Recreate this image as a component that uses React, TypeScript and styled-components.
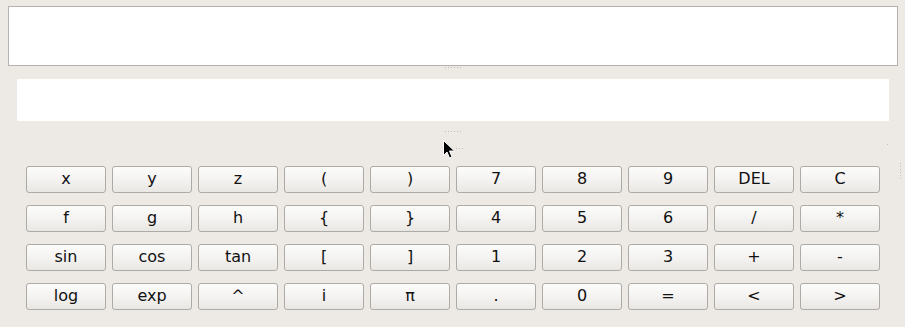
import * as React from 'react';
import styled, { createGlobalStyle } from 'styled-components';

const GlobalStyle = createGlobalStyle`
  html, body {
    margin: 0;
    padding: 0;
    background: #edeae5;
  }
`;

const Window = styled.div`
  position: relative;
  width: 905px;
  height: 327px;
  overflow: hidden;
  background: #edeae5;
  font-family: "DejaVu Sans", "Liberation Sans", sans-serif;
  display: flex;
  flex-direction: column;
`;

const History = styled.div`
  margin: 6px 0 0 8px;
  width: 888px;
  height: 58px;
  background: #fff;
  border: 1px solid #b4b2ae;
`;

const Handle = styled.div<{ $height: number; $top: number }>`
  height: ${props => props.$height}px;
  display: flex;
  justify-content: center;
  padding-top: ${props => props.$top}px;
  box-sizing: border-box;
`;

const Dots = styled.div<{ $width: number; $shift?: number }>`
  width: ${props => props.$width}px;
  height: 1px;
  margin-left: ${props => props.$shift || 0}px;
  background: repeating-linear-gradient(
    to right,
    #bdb9b2 0,
    #bdb9b2 1px,
    transparent 1px,
    transparent 3px
  );
`;

const Input = styled.div`
  margin-left: 17px;
  width: 872px;
  height: 42px;
  background: #fff;
`;

const Middle = styled.div`
  height: 45px;
  display: flex;
  flex-direction: column;
  align-items: center;
  padding-top: 10px;
  box-sizing: border-box;
  gap: 16px;
`;

const Keypad = styled.div`
  display: grid;
  grid-template-columns: repeat(10, 80px);
  grid-auto-rows: 27px;
  gap: 12px 6px;
  padding-left: 26px;
`;

const Key = styled.button`
  box-sizing: border-box;
  margin: 0;
  padding: 0 0 1px;
  border: 1px solid #aeaba6;
  border-radius: 3px;
  background: linear-gradient(to bottom, #fcfcfb 0%, #f3f2f0 55%, #e9e7e3 100%);
  font-family: "DejaVu Sans", "Liberation Sans", sans-serif;
  font-size: 16px;
  color: #111;
  line-height: 1;
  display: flex;
  align-items: center;
  justify-content: center;
`;

const VerticalGrip = styled.div`
  position: absolute;
  left: 900px;
  top: 163px;
  width: 1px;
  height: 16px;
  background: repeating-linear-gradient(
    to bottom,
    #c4c0b9 0,
    #c4c0b9 1px,
    transparent 1px,
    transparent 3px
  );
`;

const Speck = styled.div`
  position: absolute;
  left: 887px;
  top: 144px;
  width: 1px;
  height: 1px;
  background: #c4c0b9;
`;

const Pointer = styled.svg`
  position: absolute;
  left: 442px;
  top: 139px;
`;

const keys = [
  'x', 'y', 'z', '(', ')', '7', '8', '9', 'DEL', 'C',
  'f', 'g', 'h', '{', '}', '4', '5', '6', '/', '*',
  'sin', 'cos', 'tan', '[', ']', '1', '2', '3', '+', '-',
  'log', 'exp', '^', 'i', 'π', '.', '0', '=', '<', '>'
];

const App = () => (
  <Window>
    <GlobalStyle />
    <History />
    <Handle $height={13} $top={1}>
      <Dots $width={16} $shift={1} />
    </Handle>
    <Input />
    <Middle>
      <Dots $width={16} $shift={1} />
      <Dots $width={7} $shift={13} />
    </Middle>
    <Keypad>
      {keys.map(k => (
        <Key key={k}>{k}</Key>
      ))}
    </Keypad>
    <Speck />
    <VerticalGrip />
    <Pointer width="14" height="21" viewBox="0 0 14 21">
      <path
        d="M1.5 1.5 L1.5 16.5 L5 13 L7.5 19 L10 18 L7.5 12 L12.5 12 Z"
        fill="#000"
        stroke="#fff"
        strokeWidth="1"
        strokeLinejoin="round"
      />
    </Pointer>
  </Window>
);

export default App;
